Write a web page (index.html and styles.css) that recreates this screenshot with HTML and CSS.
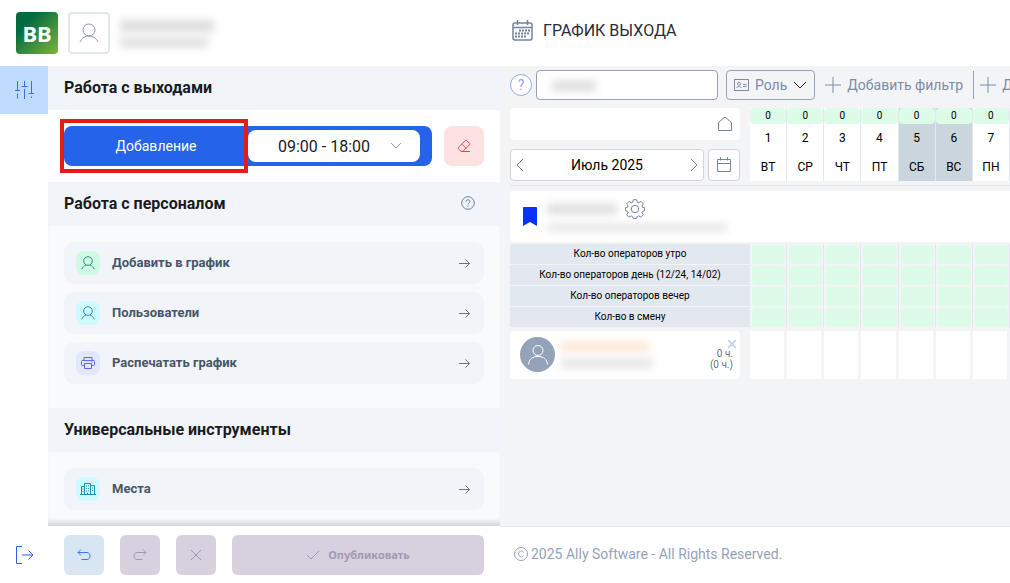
FILE: index.html
```html
<!DOCTYPE html>
<html lang="ru">
<head>
    <meta charset="UTF-8">
    <meta name="viewport" content="width=device-width, initial-scale=1.0">
    <title>График выхода</title>
    <link rel="stylesheet" href="styles.css">
</head>
<body>
    <svg class="sprite" aria-hidden="true">
        <symbol id="user" viewBox="0 0 20 20"><circle cx="10" cy="7" r="6"/><path d="M1 19c2-4 5-6 9-6s7 2 9 6"/></symbol>
        <symbol id="user-small" viewBox="0 0 14 14"><circle cx="7" cy="5" r="4.300"/><path d="M.7 13.200c1-2.200 2.500-3.500 4.300-4.200M13.300 13.200C12.300 11 10.800 9.700 9 9"/></symbol>
        <symbol id="arrow" viewBox="0 0 12 12"><path d="M0 6.500h10.500M6.500 2.500l4 4-4 4"/></symbol>
        <symbol id="plus" viewBox="0 0 16 16"><path d="M8 0v16M0 8h16"/></symbol>
    </svg>

    <div class="app">
        <header class="profile">
            <div class="logo">ВВ</div>
            <button class="avatar-btn" aria-label="Профиль"><svg width="20" height="20"><use href="#user"/></svg></button>
            <div class="hidden-name">
                <span class="smudge name-line"></span>
                <span class="smudge role-line"></span>
            </div>
        </header>

        <header class="page-title">
            <svg width="21" height="21" viewBox="0 0 21 21">
                <rect x="1" y="3" width="19" height="17" rx="2" stroke-width="1.500"/>
                <path d="M1 7.500h19M5.500 0v5M15.500 0v5" stroke-width="1.500"/>
                <path class="big-dots" d="M7 10.500h11M3 13.500h15M3 16.500h11"/>
            </svg>
            <h1>ГРАФИК ВЫХОДА</h1>
        </header>

        <nav class="rail">
            <button class="rail-btn active" aria-label="Инструменты">
                <svg width="20" height="18" viewBox="0 0 20 18"><path d="M3.500 0v9M1 9.500h5M3.500 12.500v5M10.500 0v5M7.500 5.500h6M10.500 8v10M17.500 0v12M14.500 12.500h6M17.500 15.500v1.500"/></svg>
            </button>
        </nav>

        <aside class="panel">
            <section>
                <h2>Работа с выходами</h2>
                <div class="shift">
                    <div class="shift-bar">
                        <button class="shift-mode">Добавление</button>
                        <button class="shift-time">
                            <span>09:00 - 18:00</span>
                            <svg width="12" height="8" viewBox="0 0 12 8"><path d="M1 1l5 5 5-5"/></svg>
                        </button>
                        <span class="highlight"></span>
                    </div>
                    <button class="eraser" aria-label="Стереть">
                        <svg width="14" height="14" viewBox="0 0 14 14"><path d="M1.500 8.300L8.200 1.600q.8-.8 1.600 0l2.600 2.600q.8.800 0 1.600L6 12.300H4L1.500 9.900q-.8-.8 0-1.600zM4.800 5l4.400 4.400M4 12.500h9"/></svg>
                    </button>
                </div>
            </section>
            <section>
                <h2>Работа с персоналом
                    <svg width="14" height="14" viewBox="0 0 14 14"><circle cx="7" cy="7" r="6.300"/><path d="M5 5.700c0-2.700 4-2.500 4-.3 0 1.500-2 1.400-2 3M7 9.600v1.200"/></svg>
                </h2>
                <div class="links">
                    <a href="#" class="link">
                        <span class="link-icon green"><svg width="14" height="14"><use href="#user-small"/></svg></span>
                        Добавить в график
                        <svg class="arrow" width="12" height="12"><use href="#arrow"/></svg>
                    </a>
                    <a href="#" class="link">
                        <span class="link-icon cyan"><svg width="14" height="14"><use href="#user-small"/></svg></span>
                        Пользователи
                        <svg class="arrow" width="12" height="12"><use href="#arrow"/></svg>
                    </a>
                    <a href="#" class="link">
                        <span class="link-icon indigo"><svg width="14" height="14" viewBox="0 0 14 14"><path d="M3 4.500V1.500h8v3M3 9.500H1.500q-1 0-1-1v-3q0-1 1-1h11q1 0 1 1v3q0 1-1 1H11M3.500 7.500h7v5h-7zM10.500 6h1"/></svg></span>
                        Распечатать график
                        <svg class="arrow" width="12" height="12"><use href="#arrow"/></svg>
                    </a>
                </div>
            </section>
            <section>
                <h2>Универсальные инструменты</h2>
                <div class="links">
                    <a href="#" class="link">
                        <span class="link-icon cyan"><svg width="16" height="14" viewBox="0 0 16 14"><path d="M0 12.500h16M1.500 12.500v-8h3M4.500 12.500v-11h6v11M10.500 3.500h4v9M7.500 12.500v-2"/><path class="dots" d="M6 4h4M6 6.500h4M6 9h4M2.500 7h2M2.500 9.500h2M12 6h2M12 8.500h2"/></svg></span>
                        Места
                        <svg class="arrow" width="12" height="12"><use href="#arrow"/></svg>
                    </a>
                </div>
            </section>
        </aside>

        <main class="schedule">
            <div class="filters">
                <button class="help" aria-label="Помощь">?</button>
                <div class="search">
                    <input type="text" aria-label="Поиск">
                    <span class="smudge search-text"></span>
                </div>
                <button class="role">
                    <svg width="15" height="12" viewBox="0 0 15 12"><rect x=".5" y=".5" width="14" height="11"/><circle cx="5" cy="4.700" r="1.500"/><path d="M2.500 9c1-2 4-2 5 0M9 5.500h3.500M9 7.500h3.500"/></svg>
                    Роль
                    <svg class="chevron" width="14" height="8" viewBox="0 0 14 8"><path d="M1 1l6 6 6-6"/></svg>
                </button>
                <button class="add"><svg width="16" height="16"><use href="#plus"/></svg>Добавить фильтр</button>
                <span class="divider"></span>
                <button class="add"><svg width="16" height="16"><use href="#plus"/></svg>Добавить</button>
            </div>

            <table>
                <thead>
                    <tr>
                        <th class="corner">
                            <div class="home">
                                <svg width="16" height="16" viewBox="0 0 16 16"><path d="M1.500 6.500L8 1l6.500 5.500v8h-13z"/></svg>
                            </div>
                            <div class="period">
                                <div class="month">
                                    <button aria-label="Назад"><svg width="8" height="14" viewBox="0 0 8 14"><path d="M7 1L1 7l6 6"/></svg></button>
                                    <span>Июль 2025</span>
                                    <button aria-label="Вперёд"><svg width="8" height="14" viewBox="0 0 8 14"><path d="M1 1l6 6-6 6"/></svg></button>
                                </div>
                                <button class="pick" aria-label="Выбрать дату"><svg width="16" height="16" viewBox="0 0 16 16"><path d="M1.500 2.500h13v12h-13zM1.500 6.500h13M4.500 0v3.500M11.500 0v3.500"/></svg></button>
                            </div>
                        </th>
                        <th class="day"><div class="day-box"><span class="count">0</span><span>1</span><span>ВТ</span></div></th>
                        <th class="day"><div class="day-box"><span class="count">0</span><span>2</span><span>СР</span></div></th>
                        <th class="day"><div class="day-box"><span class="count">0</span><span>3</span><span>ЧТ</span></div></th>
                        <th class="day"><div class="day-box"><span class="count">0</span><span>4</span><span>ПТ</span></div></th>
                        <th class="day"><div class="day-box weekend"><span class="count">0</span><span>5</span><span>СБ</span></div></th>
                        <th class="day"><div class="day-box weekend"><span class="count">0</span><span>6</span><span>ВС</span></div></th>
                        <th class="day"><div class="day-box"><span class="count">0</span><span>7</span><span>ПН</span></div></th>
                    </tr>
                </thead>
                <tbody>
                    <tr>
                        <td colspan="8" class="place-cell">
                            <div class="place">
                                <svg class="bookmark" width="14" height="20" viewBox="0 0 14 20"><path d="M1 0h12q1 0 1 1v18l-7-4-7 4V1q0-1 1-1z"/></svg>
                                <div class="place-info">
                                    <div class="place-top">
                                        <span class="smudge place-name"></span>
                                        <svg class="gear" width="20" height="20" viewBox="0 0 20 20"><circle cx="10" cy="10" r="3.700"/><path d="M8.300.7h3.400l.6 2.500 1.500.6 2.200-1.400 2.400 2.400L17 7l.6 1.400 2 .3v3l-2 .6-.6 1.500 1.300 2-2.400 2.400-2.200-1.300-1.500.6-.5 1.900H8.300l-.6-1.900-1.500-.6L4 18.200l-2.300-2.400 1.300-2-.6-1.500-2-.6v-3l2-.3L3 7 1.700 4.800 4 2.400l2.200 1.400 1.500-.6z"/></svg>
                                    </div>
                                    <span class="smudge place-address"></span>
                                </div>
                            </div>
                        </td>
                    </tr>
                    <tr class="norm"><th>Кол-во операторов утро</th><td><div></div></td><td><div></div></td><td><div></div></td><td><div></div></td><td><div></div></td><td><div></div></td><td><div></div></td></tr>
                    <tr class="norm"><th>Кол-во операторов день (12/24, 14/02)</th><td><div></div></td><td><div></div></td><td><div></div></td><td><div></div></td><td><div></div></td><td><div></div></td><td><div></div></td></tr>
                    <tr class="norm"><th>Кол-во операторов вечер</th><td><div></div></td><td><div></div></td><td><div></div></td><td><div></div></td><td><div></div></td><td><div></div></td><td><div></div></td></tr>
                    <tr class="norm"><th>Кол-во в смену</th><td><div></div></td><td><div></div></td><td><div></div></td><td><div></div></td><td><div></div></td><td><div></div></td><td><div></div></td></tr>
                    <tr class="worker">
                        <th>
                            <div class="worker-card">
                                <span class="worker-photo">
                                    <svg width="22" height="22" viewBox="0 0 22 22"><circle cx="11" cy="6.500" r="5"/><path d="M1.500 20.500c.5-5.500 4-8 9.500-8s9 2.500 9.500 8"/></svg>
                                </span>
                                <div class="worker-info">
                                    <span class="smudge worker-name"></span>
                                    <span class="smudge worker-role"></span>
                                </div>
                                <div class="hours">
                                    <button aria-label="Убрать"><svg width="8" height="8" viewBox="0 0 8 8"><path d="M0 0l8 8M8 0L0 8"/></svg></button>
                                    <span>0 ч.</span>
                                    <span>(0 ч.)</span>
                                </div>
                            </div>
                        </th>
                        <td><div></div></td><td><div></div></td><td><div></div></td><td><div></div></td><td><div></div></td><td><div></div></td><td><div></div></td>
                    </tr>
                </tbody>
            </table>
        </main>

        <div class="actions">
            <button class="exit" aria-label="Выйти"><svg width="20" height="20" viewBox="0 0 20 20"><path d="M8 1.500H2.500v17H8M8 10h11M14.500 5.500L19 10l-4.500 4.500"/></svg></button>
            <div class="action-row">
                <button class="square undo" aria-label="Отменить"><svg width="14" height="12" viewBox="0 0 14 12"><path d="M4 .5L1 3.500l3 3M1 3.500h9c4 0 4 7 0 7H4.500"/></svg></button>
                <button class="square" aria-label="Повторить" disabled><svg width="14" height="12" viewBox="0 0 14 12"><path d="M10 .5l3 3-3 3M13 3.500H4c-4 0-4 7 0 7h5.500"/></svg></button>
                <button class="square" aria-label="Сбросить" disabled><svg width="12" height="12" viewBox="0 0 12 12"><path d="M1 1l10 10M11 1L1 11"/></svg></button>
                <button class="publish" disabled><svg width="14" height="10" viewBox="0 0 14 10"><path d="M1 5l4 4 8-8"/></svg>Опубликовать</button>
            </div>
        </div>

        <footer>
            <svg width="14" height="14" viewBox="0 0 14 14"><circle cx="7" cy="7" r="6.500"/><path d="M9.500 5.500c-1.500-2.500-5-1.200-5 1.500s3.500 4 5 1.500"/></svg>
            2025 Ally Software - All Rights Reserved.
        </footer>
    </div>
</body>
</html>
```

FILE: styles.css
```css
* {
    box-sizing: border-box;
}

body {
    margin: 0;
    font-family: Roboto, "Liberation Sans", sans-serif;
    font-size: 14px;
    color: #1b1b1f;
    background: white;
}

button {
    font: inherit;
    color: inherit;
    background: none;
    border: none;
    padding: 0;
    cursor: pointer;
    display: flex;
    align-items: center;
    justify-content: center;
}

svg {
    fill: none;
    stroke: currentColor;
    flex-shrink: 0;
}

.sprite {
    display: none;
}

.dots {
    stroke-dasharray: 1 1;
}

.big-dots {
    stroke-width: 2;
    stroke-dasharray: 2 1;
}

.smudge {
    display: block;
    filter: blur(4px);
    background: #dcdcdc;
}

.app {
    display: grid;
    grid-template-columns: 48px 452px minmax(0, 1fr);
    grid-template-rows: 66px minmax(0, 1fr) 57px;
    height: 100vh;
}

/* Шапка */
.profile {
    grid-column: 1 / 3;
    display: flex;
    align-items: center;
    gap: 10px;
    padding-left: 16px;
}

.logo {
    width: 42px;
    height: 42px;
    border-radius: 4px;
    background: linear-gradient(135deg, #006b3f 25%, #7fb53c);
    color: white;
    font: bold 22px/42px "Noto Sans", sans-serif;
    text-align: center;
}

.avatar-btn {
    width: 42px;
    height: 42px;
    border: 2px solid #e2e8f0;
    border-radius: 4px;
    color: #8796b0;
}

.hidden-name {
    display: grid;
    gap: 6px;
}

.name-line {
    width: 94px;
    height: 12px;
}

.role-line {
    width: 88px;
    height: 9px;
}

.page-title {
    display: flex;
    align-items: center;
    gap: 10px;
    padding: 0 12px 6px;
    color: #71859f;
}

.page-title h1 {
    margin: 0;
    font-size: 16px;
    font-weight: normal;
    color: #2b2b38;
}

/* Левая панель */
.rail-btn {
    width: 48px;
    height: 48px;
    color: #3b6cf0;
}

.rail-btn.active {
    background: #bfdbfe;
}

.panel {
    background: #f8fafc;
    overflow: hidden;
    box-shadow: inset 0 -7px 5px -3px #d5d7d9;
}

.panel h2 {
    display: flex;
    align-items: center;
    justify-content: space-between;
    height: 44px;
    margin: 0;
    padding: 0 25px 2px 16px;
    font-size: 16px;
    font-weight: bold;
    background: #f1f5f9;
}

.panel h2 svg {
    color: #64809c;
}

.shift {
    display: flex;
    gap: 12px;
    padding: 16px;
    background: white;
}

.shift-bar {
    position: relative;
    flex: 1;
    display: flex;
    padding: 4px 12px 4px 0;
    border-radius: 8px;
    background: #2563eb;
}

.shift-mode {
    flex: 1;
    color: white;
}

.shift-time {
    width: 172px;
    gap: 20px;
    padding-left: 12px;
    border-radius: 8px;
    background: white;
    font-size: 16px;
    box-shadow: 0 0 1px #64748b;
}

.shift-time svg {
    color: #94a3b8;
}

.highlight {
    position: absolute;
    top: -7px;
    left: -4px;
    width: 188px;
    height: 54px;
    border: 4px solid #e81919;
    pointer-events: none;
}

.eraser {
    width: 40px;
    height: 40px;
    border-radius: 8px;
    background: #fee2e2;
    color: #de4b5c;
}

.links {
    display: grid;
    gap: 8px;
    padding: 16px 16px 24px;
}

.link {
    display: flex;
    align-items: center;
    gap: 12px;
    height: 42px;
    padding: 0 13px 1px 12px;
    border-radius: 10px;
    background: #f1f5f9;
    color: #475569;
    font-size: 13px;
    font-weight: bold;
    text-decoration: none;
}

.link .arrow {
    margin-left: auto;
    color: #64748b;
}

.link-icon {
    display: flex;
    align-items: center;
    justify-content: center;
    width: 24px;
    height: 24px;
    border-radius: 8px;
}

.green {
    background: #d1fae5;
    color: #1f9a78;
}

.cyan {
    background: #cffafe;
    color: #1f94ae;
}

.indigo {
    background: #e0e7ff;
    color: #6366f1;
}

/* График */
.schedule {
    background: #f3f4f6;
    padding: 4px 0 0 10px;
    overflow: hidden;
}

.filters {
    display: flex;
    align-items: center;
    height: 30px;
    margin-bottom: 8px;
    color: #7b8ca5;
    white-space: nowrap;
}

.help {
    flex-shrink: 0;
    width: 22px;
    height: 22px;
    margin-right: 4px;
    border: 1px solid #96a9fa;
    border-radius: 50%;
    background: white;
    color: #96a9fa;
}

.search {
    position: relative;
    flex-shrink: 0;
}

.search input {
    display: block;
    width: 182px;
    height: 30px;
    padding: 0 12px;
    border: 1px solid #94a3b8;
    border-radius: 4px;
    background: white;
    font: inherit;
}

.search-text {
    position: absolute;
    left: 16px;
    top: 11px;
    width: 44px;
    height: 10px;
}

.role {
    height: 30px;
    margin: 0 10px 0 8px;
    padding: 0 7px;
    gap: 6px;
    border: 1px solid #94a3b8;
    border-radius: 4px;
}

.chevron {
    color: #27272a;
}

.add {
    gap: 6px;
}

.divider {
    flex-shrink: 0;
    width: 1px;
    height: 28px;
    margin: 0 6px 0 10px;
    background: #94a3b8;
}

table {
    width: 100%;
    table-layout: fixed;
    border-spacing: 0;
    color: #000;
}

th {
    font-weight: normal;
}

th, td {
    padding: 0;
}

thead th {
    padding-bottom: 4px;
    border-bottom: 1px solid #e5e7eb;
}

thead .corner {
    width: 240px;
    padding-right: 10px;
}

.home {
    display: flex;
    align-items: center;
    justify-content: flex-end;
    height: 32px;
    margin-bottom: 9px;
    padding-right: 7px;
    border-radius: 4px;
    background: white;
    color: #71859f;
}

.period {
    display: flex;
    gap: 4px;
}

.month {
    flex: 1;
    display: flex;
    align-items: center;
    justify-content: space-between;
    padding: 0 5px;
}

.month, .pick {
    height: 32px;
    border: 1px solid #d4d4d8;
    border-radius: 4px;
    background: white;
}

.month button, .pick {
    color: #71859f;
}

.pick {
    width: 32px;
}

.day-box {
    display: grid;
    grid-template-rows: 16px 28px 29px;
    align-items: center;
    border-right: 1px solid #e2e8f0;
    background: white;
    font-size: 12px;
}

.day-box.weekend {
    background: #cbd5dd;
}

.count {
    border-radius: 4px;
    background: #dcfce7;
    font-size: 10px;
    line-height: 16px;
}

.place-cell {
    padding: 5px 0 2px;
}

.place {
    display: flex;
    align-items: center;
    gap: 10px;
    height: 51px;
    padding: 0 13px;
    border-radius: 4px 0 0 4px;
    background: white;
}

.bookmark {
    fill: #0a32fa;
    stroke: none;
}

.place-info {
    display: grid;
    gap: 5px;
    padding-bottom: 3px;
}

.place-top {
    display: flex;
    align-items: center;
    gap: 8px;
}

.place-name {
    width: 70px;
    height: 10px;
}

.gear {
    color: #71859f;
}

.place-address {
    width: 180px;
    height: 7px;
    background: #e3e3e3;
}

.norm th {
    height: 21px;
    padding-bottom: 1px;
    border-bottom: 1px solid #f3f4f6;
    background: #e2e8f0;
    font-size: 10px;
}

.norm td {
    padding: 1px 1px 1px 2px;
    border-right: 1px solid #e2e8f0;
}

.norm div {
    height: 19px;
    border-radius: 4px;
    background: #dcfce7;
}

.worker th {
    padding: 3px 10px 0 0;
}

.worker td {
    padding: 3px 3px 0 0;
}

.worker td div {
    height: 48px;
    background: white;
}

.worker-card {
    display: flex;
    align-items: center;
    height: 48px;
    padding: 0 4px 1px 10px;
    border-radius: 4px;
    background: white;
}

.worker-photo {
    display: flex;
    align-items: center;
    justify-content: center;
    width: 35px;
    height: 35px;
    border-radius: 50%;
    background: #94a3b8;
    color: white;
}

.worker-info {
    display: grid;
    gap: 8px;
    margin-left: 6px;
}

.worker-name {
    width: 88px;
    height: 9px;
    background: #fde3d0;
}

.worker-role {
    width: 92px;
    height: 9px;
    background: #e3e3e3;
}

.hours {
    display: grid;
    justify-items: end;
    margin-left: auto;
    color: #64748b;
    font-size: 10px;
    line-height: 11px;
}

.hours span {
    padding-right: 3px;
}

.hours button {
    height: 9px;
    color: #cbd5e1;
}

.hours svg {
    stroke-width: 2;
}

/* Низ страницы */
.actions {
    grid-column: 1 / 3;
    display: grid;
    grid-template-columns: 48px 1fr;
    align-items: center;
}

.exit {
    color: #2b5ff0;
}

.action-row {
    display: flex;
    gap: 16px;
    padding: 0 16px;
}

.square {
    width: 40px;
}

.square, .publish {
    height: 40px;
    border-radius: 6px;
    background: #d6d0df;
    color: #a299b0;
}

.undo {
    background: #d8e5f3;
    color: #3b76f6;
}

.publish {
    flex: 1;
    gap: 8px;
    font-family: "Noto Sans", sans-serif;
    font-size: 11px;
    font-weight: bold;
}

footer {
    display: flex;
    align-items: center;
    gap: 3px;
    padding: 0 14px 2px;
    border-top: 1px solid #e5e7eb;
    color: #94a3b8;
}
```
